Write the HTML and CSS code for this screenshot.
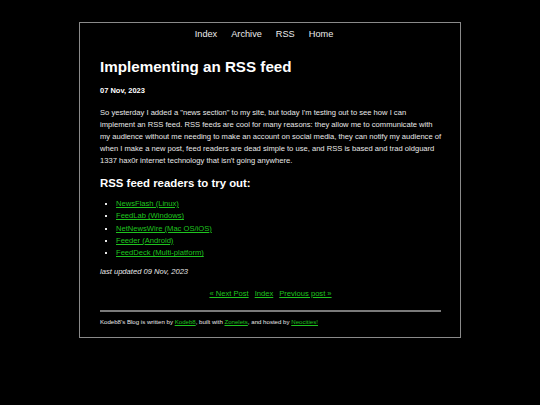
FILE: index.html
```html
<!DOCTYPE html>
<html lang="en">
<head>
<meta charset="utf-8">
<title>Implementing an RSS feed</title>
<link rel="stylesheet" href="styles.css">
</head>
<body>
<div class="page">
  <nav class="topnav">
    <a href="#">Index</a>
    <a href="#">Archive</a>
    <a href="#">RSS</a>
    <a href="#">Home</a>
  </nav>
  <main class="post">
    <h1 class="title">Implementing an RSS feed</h1>
    <p class="date">07 Nov, 2023</p>
    <p class="body">So yesterday I added a "news section" to my site, but today I'm testing out to see how I can<br>implement an RSS feed. RSS feeds are cool for many reasons: they allow me to communicate with<br>my audience without me needing to make an account on social media, they can notify my audience of<br>when I make a new post, feed readers are dead simple to use, and RSS is based and trad oldguard<br>1337 hax0r internet technology that isn't going anywhere.</p>
    <h2 class="subhead">RSS feed readers to try out:</h2>
    <ul class="readers">
      <li><a href="#">NewsFlash (Linux)</a></li>
      <li><a href="#">FeedLab (Windows)</a></li>
      <li><a href="#">NetNewsWire (Mac OS/iOS)</a></li>
      <li><a href="#">Feeder (Android)</a></li>
      <li><a href="#">FeedDeck (Multi-platform)</a></li>
    </ul>
    <p class="updated">last updated 09 Nov, 2023</p>
    <div class="postnav">
      <a href="#">« Next Post</a>
      <a href="#">Index</a>
      <a href="#">Previous post »</a>
    </div>
  </main>
  <hr class="rule">
  <footer class="footer">Kodeb8's Blog is written by <a href="#">Kodeb8</a>, built with <a href="#">Zonelets</a>, and hosted by <a href="#">Neocities!</a></footer>
</div>
</body>
</html>
```
FILE: styles.css
```css
html, body {
  margin: 0;
  padding: 0;
  background: #000;
}
body {
  font-family: "Liberation Sans", Arial, sans-serif;
  color: #e8e8e8;
}
.page {
  box-sizing: border-box;
  width: 382px;
  margin: 22px auto 0;
  border: 1px solid #8a8a8a;
  padding: 5px 19px 10px 20px;
}
a {
  color: #1fc41f;
}
.topnav {
  display: flex;
  justify-content: center;
  gap: 14px;
  padding-right: 13px;
  font-size: 9.2px;
  line-height: 12px;
}
.topnav a {
  color: #ececec;
  text-decoration: none;
}
.title {
  margin: 16px 0 0;
  font-size: 15.2px;
  line-height: 22px;
  font-weight: bold;
  color: #fff;
}
.date {
  margin: 8px 0 0;
  font-size: 7.5px;
  line-height: 10px;
  font-weight: bold;
  color: #fff;
}
.body {
  margin: 10.5px -12px 0 0;
  font-size: 7.6px;
  line-height: 12px;
}
.subhead {
  margin: 8.5px 0 0;
  font-size: 11.4px;
  line-height: 16px;
  font-weight: bold;
  color: #fff;
}
.readers {
  margin: 7px 0 0;
  padding-left: 16px;
  font-size: 7.6px;
  line-height: 12.3px;
  list-style: square;
}
.updated {
  margin: 6.5px 0 0;
  font-size: 7.6px;
  line-height: 12px;
  font-style: italic;
}
.postnav {
  margin-top: 10px;
  display: flex;
  justify-content: center;
  gap: 6px;
  font-size: 7.6px;
  line-height: 12px;
}
.rule {
  margin: 10px 0 0;
  border: 0;
  height: 2px;
  background: #7a7a7a;
}
.footer {
  margin-top: 5px;
  font-size: 6.1px;
  line-height: 10px;
}
```
